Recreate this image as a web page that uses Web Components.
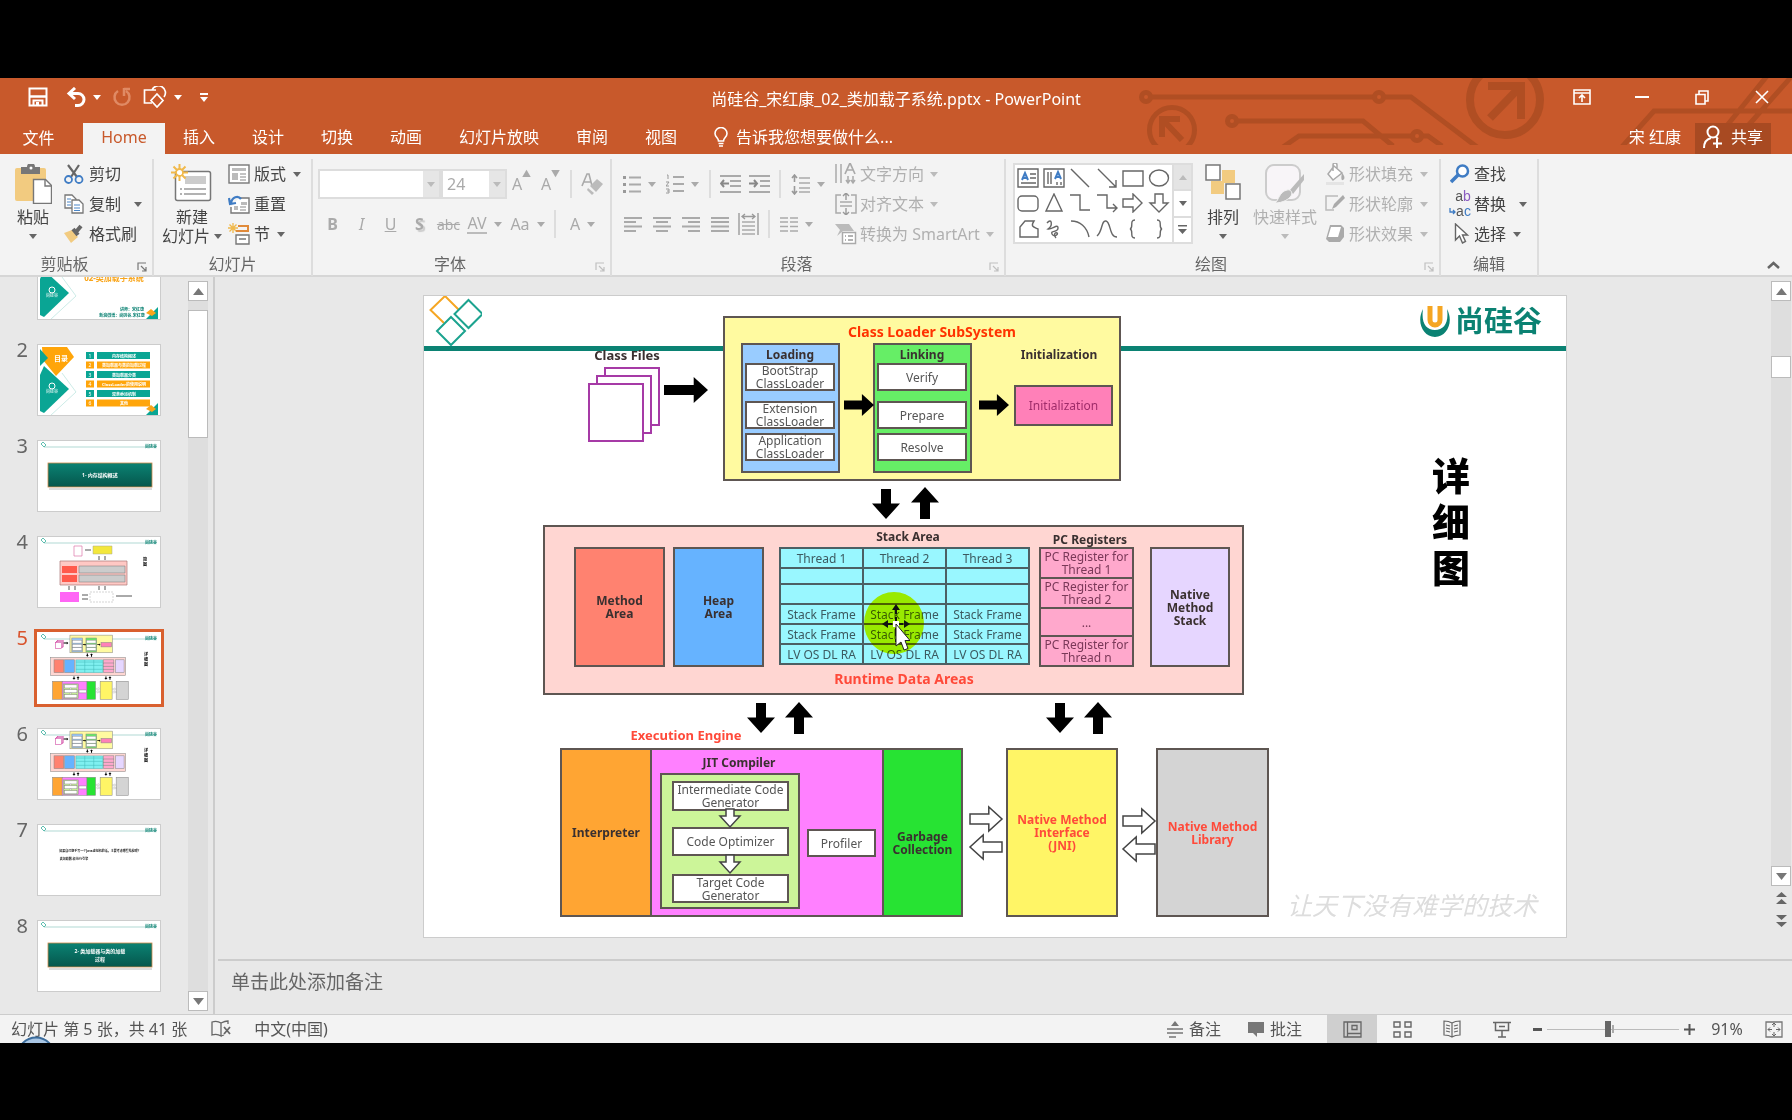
<!DOCTYPE html>
<html lang="zh-CN">
<head>
<meta charset="utf-8">
<title>尚硅谷_宋红康_02_类加载子系统.pptx - PowerPoint</title>
<style>
  html, body { height: 100%; margin: 0; background: #000; }
  body { font-family: "Noto Sans", "Noto Sans CJK SC", sans-serif; font-size: 16px; color: #444; }
</style>
</head>
<body>
<ppt-app></ppt-app>
<script>
const ICONS = {
  caret: [8, 5, '<path d="M0 0h8L4 5z" fill="currentColor"/>'],
  up: [11, 7, '<path d="M0 7L5.500 0 11 7z" fill="#777"/>'],
  down: [11, 7, '<path d="M0 0h11L5.500 7z" fill="#777"/>'],
  dblup: [11, 12, '<path d="M0 5L5.500 0 11 5zM0 12L5.500 7 11 12z" fill="#666"/>'],
  dbldown: [11, 12, '<path d="M0 0h11L5.500 5zM0 7h11L5.500 12z" fill="#666"/>'],
  save: [20, 20, '<path d="M1.500 1.500h17v17h-17z" fill="none" stroke="#fff" stroke-width="2"/><path d="M1.500 9.500h17" stroke="#fff" stroke-width="2.500"/><path d="M5.500 19v-5.500h9V19" fill="none" stroke="#fff" stroke-width="2"/><path d="M8 15h3v4H8z" fill="#fff"/>'],
  undo: [20, 20, '<path d="M9 1L3 6.500 9 12M4 6.500h8a5.500 5.500 0 0 1 0 12H9" fill="none" stroke="#fff" stroke-width="3"/>'],
  redo: [20, 20, '<path d="M6 4a7.500 7.500 0 1 0 8 0M12 1v8M12 2h6" fill="none" stroke="#e08a64" stroke-width="2.500"/>'],
  qshape: [24, 22, '<path d="M9 17H1.500V4H13M9 4a7 7 0 1 1 12 7" fill="none" stroke="#fff" stroke-width="1.700"/><path d="M14 8l6 6.500-6 6.500-6-6.500z" fill="none" stroke="#fff" stroke-width="1.700"/>'],
  custom: [8, 9, '<path d="M0 0h8v2H0zM0 4h8L4 9z" fill="#fff"/>'],
  ribbonopt: [18, 16, '<path d="M1 1h16v14H1zM1 4h16M9 13V6M6 9l3-3 3 3" fill="none" stroke="#fff" stroke-width="1.600"/>'],
  min: [14, 2, '<path d="M0 0h14v2H0z" fill="#fff"/>'],
  restore: [14, 15, '<path d="M1 4.500h9V14H1zM4 4V1h9v10h-3" fill="none" stroke="#fff" stroke-width="1.600"/>'],
  close: [14, 14, '<path d="M1 1l12 12M13 1L1 13" stroke="#fff" stroke-width="1.600"/>'],
  bulb: [14, 20, '<path d="M4.500 14c0-3-3.500-4-3.500-7.500a6 6 0 0 1 12 0c0 3.500-3.500 4.500-3.500 7.500zM4.500 16.500h5M5 19h4" fill="none" stroke="#fff" stroke-width="1.600"/>'],
  person: [20, 24, '<circle cx="10" cy="7" r="5.500" fill="none" stroke="#fff" stroke-width="2"/><path d="M1 23c0-6 3-9 7-10M14 14v9M10 18.500h9M13 12l2 2" fill="none" stroke="#fff" stroke-width="2"/>'],
  paste: [38, 40, '<rect x="1" y="4" width="31" height="33" rx="2" fill="#f2cb80"/><path d="M7 3h6a4 4 0 0 1 8 0h5v7H7z" fill="#777"/><circle cx="17" cy="4" r="1.500" fill="#fff"/><path d="M19.500 15.500h12l6 6v18h-18z" fill="#fff" stroke="#777" stroke-width="1.400"/><path d="M31 15.500V22h6.500" fill="none" stroke="#777" stroke-width="1.400"/>'],
  cut: [20, 20, '<path d="M4 1l9 12M15 1L7 13" stroke="#666" stroke-width="2.200"/><circle cx="4.500" cy="15.500" r="3.500" fill="none" stroke="#3f7cc4" stroke-width="1.800"/><circle cx="15" cy="15.500" r="3.500" fill="none" stroke="#3f7cc4" stroke-width="1.800"/>'],
  copy: [20, 20, '<path d="M1 1h7l4 4v9H1z" fill="#fff" stroke="#777" stroke-width="1.300"/><path d="M8 6h7l4 4v9H8z" fill="#fff" stroke="#777" stroke-width="1.300"/><path d="M3 5h4M3 8h4M3 11h4M10 11h6M10 14h6M10 16.500h6" stroke="#4a86c8" stroke-width="1.100"/>'],
  brush: [20, 20, '<path d="M0 9l8-3 6 7-7 6z" fill="#f2cb80"/><path d="M9 5l5 6M12 8l5-6" stroke="#666" stroke-width="4"/>'],
  newslide: [42, 38, '<rect x="4.500" y="7.500" width="35" height="29" rx="2" fill="#fff" stroke="#777" stroke-width="1.500"/><path d="M14 12h21v8H14z" fill="#ccc"/><path d="M9 25h2M13 25h22M9 30h2M13 30h22" stroke="#999" stroke-width="1.500"/><path d="M8.500 0v17M0 8.500h17M2.500 2.500l12 12M14.500 2.500l-12 12" stroke="#f0b94c" stroke-width="2"/><circle cx="8.500" cy="8.500" r="3.500" fill="#fff" stroke="#f0b94c" stroke-width="1.800"/>'],
  layout: [22, 20, '<rect x="1" y="1" width="20" height="18" fill="#fff" stroke="#777" stroke-width="1.400"/><path d="M4 4h14v3H4zM4 9h6v7H4z" fill="#bbb"/><path d="M12 10h6M12 13h6M12 16h6" stroke="#888" stroke-width="1.200"/>'],
  reset: [22, 20, '<path d="M11 4h10v15H3v-6" fill="#fff" stroke="#777" stroke-width="1.400"/><path d="M13 8h6v3h-6zM6 12h4v4H6z" fill="#bbb"/><path d="M12 13h6M12 16h6" stroke="#888"/><path d="M3 9C4 3 10 1 13 5M1 4l1 6 6-1" fill="none" stroke="#3f7cc4" stroke-width="2.200"/>'],
  section: [22, 22, '<path d="M5 0v10M0 5h10M1.500 1.500l7 7M8.500 1.500l-7 7" stroke="#f0b94c" stroke-width="1.300"/><path d="M10 3h10v5H8" fill="none" stroke="#e08a3a" stroke-width="2"/><path d="M8 12h13v9H8z" fill="#fff" stroke="#777" stroke-width="1.400"/><path d="M11 16h7" stroke="#999" stroke-width="2"/>'],
  eraser: [22, 22, '<path d="M1 13L6 1h2l3 12M3 9h7" fill="none" stroke="#aaa" stroke-width="1.600"/><path d="M9 13l7-7 6 5-7 8z" fill="#bbb"/><path d="M7 15l6 5-2 2-5-5z" fill="#bbb"/>'],
  bullets: [18, 19, '<path d="M6 2.500h12M6 9.500h12M6 16.500h12" stroke="#aaa" stroke-width="1.800"/><path d="M0 1h3v3H0zM0 8h3v3H0zM0 15h3v3H0z" fill="#999"/>'],
  numbers: [18, 20, '<path d="M7 3h11M7 10h11M7 17h11" stroke="#aaa" stroke-width="1.800"/><path d="M1 1h1v4M0 8h3l-3 4h3M0 15h3v4H0M1 17h2" fill="none" stroke="#999"/>'],
  dedent: [21, 18, '<path d="M0 1h21M10 6h11M10 11h11M0 17h21" stroke="#aaa" stroke-width="1.800"/><path d="M9 8.500H1M4 5L1 8.500 4 12" fill="none" stroke="#888" stroke-width="2"/>'],
  indent: [21, 18, '<path d="M0 1h21M11 6h10M11 11h10M0 17h21" stroke="#aaa" stroke-width="1.800"/><path d="M0 8.500h8M5 5l3 3.500L5 12" fill="none" stroke="#888" stroke-width="2"/>'],
  spacing: [19, 21, '<path d="M8 4h11M8 9h11M8 14h11M8 18h11" stroke="#aaa" stroke-width="1.600"/><path d="M3.500 1v7M1 4l2.500-3L6 4M3.500 12v8M1 17l2.500 3L6 17" fill="none" stroke="#999" stroke-width="1.600"/>'],
  left: [18, 15, '<path d="M0 1h18M0 5h12M0 9.500h18M0 14h12" stroke="#aaa" stroke-width="1.800"/>'],
  center: [18, 15, '<path d="M0 1h18M3 5h12M0 9.500h18M3 14h12" stroke="#aaa" stroke-width="1.800"/>'],
  right: [18, 15, '<path d="M0 1h18M6 5h12M0 9.500h18M6 14h12" stroke="#aaa" stroke-width="1.800"/>'],
  justify: [18, 15, '<path d="M0 1h18M0 5h18M0 9.500h18M0 14h18" stroke="#aaa" stroke-width="1.800"/>'],
  distribute: [21, 22, '<path d="M1 0v22M20 0v22M4 9h13M4 13h13M4 17h13M4 21h13" stroke="#aaa" stroke-width="1.700"/><path d="M4 3.500h13M7 1L4 3.500 7 6M14 1l3 2.500L14 6" fill="none" stroke="#999" stroke-width="1.300"/>'],
  columns: [18, 15, '<path d="M0 1h8M0 5h8M0 9.500h8M0 14h8M10 1h8M10 5h8M10 9.500h8M10 14h8" stroke="#aaa" stroke-width="1.700"/>'],
  textdir: [22, 22, '<path d="M1 1v19M6 1v19M13 13v7M18 13v7M11 17l2 3 2-3M16 17l2 3 2-3" fill="none" stroke="#aaa" stroke-width="1.500"/><path d="M10 11l5-11 5 11M12 7h6" fill="none" stroke="#aaa" stroke-width="1.700"/>'],
  aligntext: [22, 22, '<path d="M6 2H1v18h5M16 2h5v18h-5M5 9h12M5 13h12" fill="none" stroke="#aaa" stroke-width="1.500"/><path d="M11 0v7M8 3l3-3 3 3M11 15v7M8 19l3 3 3-3" fill="none" stroke="#999" stroke-width="1.400"/>'],
  smartart: [22, 22, '<path d="M0 1h14l5 7H8l-6 5 3-6z" fill="#bbb"/><path d="M7.500 9.500h13v11h-13z" fill="#fff" stroke="#aaa" stroke-width="1.500"/><path d="M10 13h1M13 13h5M10 17h1M13 17h5" stroke="#999" stroke-width="1.500"/>'],
  arrange: [36, 36, '<path d="M17 6h13v13H17zM6 17h13v13H6z" fill="#f2cb80"/><path d="M1 1h14v15H1zM21 20h14v15H21z" fill="#fff" stroke="#777" stroke-width="1.500"/>'],
  quick: [40, 40, '<rect x="1" y="1" width="34" height="35" rx="8" fill="#f8f5f8" stroke="#ccc" stroke-width="2"/><path d="M39 10L25 26l3 4L39 16z" fill="#bbb"/><path d="M22 26c4-1 6 3 4 6s-8 7-16 7c4-3 4-11 12-13z" fill="#bbb" stroke="#f3f3f3"/>'],
  fill: [20, 22, '<path d="M9 3l8 7-9 7-5-6zM8 8V2a2 2 0 0 1 4 0v4" fill="#fff" stroke="#aaa" stroke-width="1.500"/><path d="M17 10c3 3 3 6 1 7s-2-3-1-7z" fill="#aaa"/><path d="M1 19h18v3H1z" fill="#e4e4e4"/>'],
  outline: [20, 20, '<path d="M13 2H1v14h8" fill="none" stroke="#bbb" stroke-width="1.500"/><path d="M7 15l2-5 9-9 2 3-9 9z" fill="#aaa"/>'],
  effect: [20, 20, '<path d="M5 1h11l3 3v9l-4 5H4l-3-3z" fill="#aaa"/><path d="M6 3h10l-3 10H3z" fill="#fff"/>'],
  find: [20, 20, '<circle cx="12.500" cy="7" r="5.500" fill="#fff" stroke="#3f7cc4" stroke-width="2.500"/><path d="M8 11l-7 7" stroke="#3f7cc4" stroke-width="3.500"/>'],
  select: [20, 22, '<path d="M5.500 1v16l4-4 3 7 3-1.500-3-6.500h5z" fill="#fff" stroke="#666" stroke-width="1.400"/>'],
  launch: [10, 10, '<path d="M1 8V1h8M4 4l5 5M9 5v4H5" fill="none" stroke="currentColor" stroke-width="1.200"/>'],
  fold: [13, 8, '<path d="M1 7l5.500-5L12 7" fill="none" stroke="#666" stroke-width="2.500"/>'],
  gup: [8, 5, '<path d="M0 5l4-5 4 5z" fill="#bbb"/>'],
  gmore: [9, 9, '<path d="M0 0h9v1.500H0zM0 4h9L4.500 9z" fill="#666"/>'],
  turn: [7, 7, '<path d="M1 0v4h5M4 2l2 2-2 2" fill="none" stroke="#3f7cc4" stroke-width="1.300"/>'],
  proof: [20, 18, '<path d="M10 3C7 1 4 1 1 2v13c3-1 6-1 9 1zM10 3c2-1 4-2 7-2v3M10 16l3-1" fill="none" stroke="#666" stroke-width="1.300"/><path d="M13 7l6 7M19 7l-6 7" stroke="#666" stroke-width="1.800"/>'],
  notes: [16, 17, '<path d="M4 5l4-5 4 5z" fill="#777"/><path d="M0 8h16M0 12h16M2 16h7" stroke="#777" stroke-width="1.400"/>'],
  comment: [16, 16, '<path d="M0 1h16v11H9v4l-4-4H0z" fill="#777"/>'],
  normal: [19, 17, '<path d="M1 1h17v15H1zM4.500 1v15M5 12.500h13" fill="none" stroke="#666" stroke-width="1.300"/><path d="M9 4.500h5v4H9z" fill="none" stroke="#666" stroke-width="1.300"/>'],
  sorter: [19, 17, '<path d="M1 1h6v5H1zM12 1h6v5h-6zM1 11h6v5H1zM12 11h6v5h-6z" fill="none" stroke="#666" stroke-width="1.400"/>'],
  reading: [18, 18, '<path d="M9 3C6 1 4 1 1 1v14c3 0 5 0 8 2 3-2 5-2 8-2V1c-3 0-5 0-8 2zM9 3v14M3 5l4 1M3 8l4 1M3 11l4 1M15 5l-4 1M15 8l-4 1M15 11l-4 1" fill="none" stroke="#666" stroke-width="1.200"/>'],
  show: [18, 17, '<path d="M0 1.500h18M2.500 2v7.500h13V2M9 10v6M5 16h8M6 5.500h6" fill="none" stroke="#666" stroke-width="1.500"/>'],
  minus: [9, 3, '<path d="M0 0h9v3H0z" fill="#555"/>'],
  plus: [11, 11, '<path d="M0 4.500h11v2H0zM4.500 0h2v11h-2z" fill="#555"/>'],
  fit: [18, 17, '<path d="M1 1h16v15H1z" fill="none" stroke="#777" stroke-width="1.300"/><path d="M9 2v4M9 11v4M3 8.500h4M11 8.500h4M7 4l2-2 2 2M7 13l2 2 2-2M5 6.500l-2 2 2 2M13 6.500l2 2-2 2" fill="none" stroke="#666"/>'],
  orb: [40, 7, '<circle cx="20" cy="20" r="18.500" fill="#a9c6e4" stroke="#3b6c9c" stroke-width="2"/>'],
  diamonds: [56, 54, '<g fill="none" stroke-width="2"><path d="M33 16L19 2 4.500 16 18 29" stroke="#f5a623"/><path d="M42.500 6l14 14-14 14-14-14z" stroke="#1ca38f"/><path d="M25 23l14 14-14 14L11 37z" stroke="#1ca38f"/></g>'],
  logo: [32, 34, '<path d="M4 5C-3 18 4 33 16 33S35 18 28 5c2 14-3 21-12 21S2 19 4 5z" fill="#0b8273"/><path d="M11 2v14a5 5 0 0 0 10 0V2" fill="none" stroke="#f5a623" stroke-width="5"/>'],
  pointer: [28, 48, '<path d="M14 2v36M2 20h24" fill="none" stroke="#111" stroke-width="2" stroke-dasharray="8 3"/><path d="M14 0l-4 6h8zM0 20l6-4v8zM28 20l-6-4v8z" fill="#111"/><path d="M11 17h6v6h-6z" fill="#fff"/><path d="M14 20v22l5-4 3 8 4-1.500-3-8h5z" fill="#fff" stroke="#222"/>']
};
const icon = n => `<svg class="i i-${n}" width="${ICONS[n][0]}" height="${ICONS[n][1]}" viewBox="0 0 ${ICONS[n][0]} ${ICONS[n][1]}" aria-hidden="true">${ICONS[n][2]}</svg>`;
const BASE = `
  * { box-sizing: border-box; }
  svg { display: block; flex: none; }
  button, select, input, textarea { font: inherit; color: inherit; background: none; border: 0; border-radius: 0; padding: 0; margin: 0; }
  button { display: flex; align-items: center; justify-content: center; white-space: nowrap; }`;
function define(name, render, after) {
  customElements.define(name, class extends HTMLElement {
    constructor() { super(); this.attachShadow({ mode: 'open' }); }
    connectedCallback() {
      this.shadowRoot.innerHTML = `<style>${BASE}</style>` + render(this);
      if (after) after(this);
    }
  });
}

/* ---------- ribbon controls ---------- */
define('small-button', el => `<style>
  :host { display: flex; height: 30px; }
  button { gap: var(--gap, 4px); color: ${el.hasAttribute('off') ? '#b0b0b0' : '#444'}; line-height: 24px; }
  .ic { display: flex; width: var(--icon, 22px); justify-content: center; }
  .i-caret { margin-left: 3px; color: ${el.hasAttribute('off') ? '#bbb' : '#666'}; }
  :host([wide]) .i-caret { margin-left: 9px; }
  </style><button ${el.hasAttribute('off') ? 'disabled' : ''}><span class="ic">${el.hasAttribute('icon') ? icon(el.getAttribute('icon')) : '<slot name="icon"></slot>'}</span><slot></slot>${el.hasAttribute('menu') ? icon('caret') : ''}</button>`);

define('big-button', el => `<style>
  :host { display: block; height: 90px; flex: none; }
  button { flex-direction: column; justify-content: flex-start; width: 100%; height: 90px; color: ${el.hasAttribute('off') ? '#b0b0b0' : '#444'}; }
  .pic { height: 48px; padding-top: 5px; }
  .t { line-height: 20px; }
  .m { display: flex; align-items: center; gap: 4px; height: 19px; line-height: 19px; }
  .i-caret { color: ${el.hasAttribute('off') ? '#bbb' : '#666'}; }
  </style><button ${el.hasAttribute('off') ? 'disabled' : ''}><span class="pic">${icon(el.getAttribute('icon'))}</span><span class="t"><slot></slot></span><span class="m"><slot name="more"></slot>${icon('caret')}</span></button>`);

define('tool-button', el => `<style>
  :host { display: block; flex: none; }
  button { width: 29px; height: 30px; color: #aaa; }
  :host([menu]) button { width: 43px; gap: 7px; }
  </style><button disabled aria-label="${el.getAttribute('label') || ''}">${el.hasAttribute('icon') ? icon(el.getAttribute('icon')) : '<slot></slot>'}${el.hasAttribute('menu') ? icon('caret') : ''}</button>`);

define('combo-box', el => `<style>
  :host { display: block; position: relative; height: 30px; }
  select { appearance: none; width: 100%; height: 30px; padding: 0 4px; background: #fff; border: 2px solid #ddd; color: #aaa; opacity: 1; }
  span { position: absolute; right: 2px; top: 2px; width: 16px; height: 26px; display: grid; place-items: center; background: #e6e6e6; color: #bbb; pointer-events: none; }
  </style><select disabled aria-label="${el.getAttribute('label')}"><option>${el.getAttribute('value')}</option></select><span>${icon('caret')}</span>`);

define('ribbon-group', el => `<style>
  :host { display: flex; flex-direction: column; flex: none; height: 117px; border-right: 2px solid #ddd; }
  .body { display: flex; height: 90px; }
  .foot { display: flex; align-items: center; height: 27px; padding: 3px 3px 0 0; color: #666; line-height: 24px; }
  .name { flex: 1; text-align: center; padding-right: 6px; }
  .foot button { width: 14px; height: 14px; margin-top: 5px; color: ${el.getAttribute('launch') === 'on' ? '#777' : '#c0c0c0'}; }
  :host(:not([launch])) .name { padding: 0 0 0 3px; }
  </style><div class="body"><slot></slot></div><div class="foot"><span class="name">${el.getAttribute('label')}</span>${el.hasAttribute('launch') ? `<button aria-label="${el.getAttribute('label')}">${icon('launch')}</button>` : ''}</div>`);

const SHAPES = [
  '<path d="M2 1h20v18H2z"/><path d="M6 12l3-7 3 7M7 10h4" stroke="#3f7cc4" stroke-width="2"/><path d="M14 6h6M14 10h6M5 15h15"/>',
  '<path d="M2 1h20v18H2zM6 4v12M9 4v12M15 14v3M19 14v3"/><path d="M13 11l3-7 3 7M14 9h4" stroke="#3f7cc4" stroke-width="2"/>',
  '<path d="M3 1l18 18"/>', '<path d="M3 1l18 18M21 12v7h-7"/>', '<path d="M2 3h20v15H2z"/>', '<ellipse cx="12" cy="10" rx="9.500" ry="8"/>',
  '<rect x="2" y="3" width="20" height="15" rx="4"/>', '<path d="M12 1l8 17H4z"/>', '<path d="M2 2h10v15h10"/>', '<path d="M2 2h10v13h10M18 11l4 4-4 4"/>', '<path d="M2 6h10V1l9 9-9 9v-5H2z"/>', '<path d="M8 1h8v9h5l-9 9-9-9h5z"/>',
  '<path d="M4 18V8l5-6h9c-4 6 0 6 4 8v8z"/>', '<path d="M5 4c5-6 6 3 1 6 4 1 10-6 10-1s-8 2-6 6 7 0 5-1-4 2-1 5"/>', '<path d="M3 2c9 0 16 6 18 16"/>', '<path d="M2 17C8 12 6 1 11 2s3 16 11 16"/>', '<path d="M14 1c-6 0-1 8-5 9 4 1-1 9 5 9"/>', '<path d="M10 1c6 0 1 8 5 9-4 1 1 9-5 9"/>'];
define('shape-gallery', () => `<style>
  :host { display: flex; width: 180px; height: 81px; margin-top: 4px; background: #fff; border: 2px solid #ddd; }
  .g { flex: 1; display: grid; grid-template-columns: repeat(6, 1fr); grid-template-rows: repeat(3, 1fr); place-items: center; }
  .g svg { fill: none; stroke: #666; stroke-width: 1.4; }
  .s { width: 19px; display: flex; flex-direction: column; border-left: 2px solid #ddd; color: #666; }
  .s button { flex: 1; width: 100%; }
  .s button + button { border-top: 2px solid #ddd; }
  .s button:first-child { background: #e4e4e4; }
  </style><div class="g">${SHAPES.map(s => `<button aria-label="形状"><svg width="24" height="20" viewBox="0 0 24 20">${s}</svg></button>`).join('')}</div>
  <div class="s"><button aria-label="上">${icon('gup')}</button><button aria-label="下">${icon('caret')}</button><button aria-label="更多">${icon('gmore')}</button></div>`);

define('ppt-ribbon', () => `<style>
  :host { display: flex; height: 123px; padding-top: 5px; background: #f3f3f3; border-bottom: 2px solid #d6d6d6; color: #444; }
  .col { display: flex; flex-direction: column; }
  .rows { display: flex; flex-direction: column; gap: 10px; padding-top: 10px; }
  .row { display: flex; align-items: center; height: 30px; }
  .sep { width: 2px; height: 28px; background: #ddd; margin: 0 5px; }
  .font { padding-left: 5px; } .para { padding-left: 6px; width: 223px; }
  .fill { flex: 1; display: flex; align-items: flex-end; justify-content: flex-end; padding: 0 12px 6px 0; }
  .ab { display: flex; flex-direction: column; align-items: flex-end; font: 14px/15px "Liberation Sans", sans-serif; color: #555; }
  .ab > span { display: flex; align-items: center; height: 15px; }
  .ab b { font-weight: 400; color: #8a5cc0; } .ab i { font-style: normal; color: #3f7cc4; }
  .av { border-bottom: 2px solid #bbb; line-height: 18px; }
  .sh { text-shadow: 2px 2px 1px #ccc; font-weight: 700; }
  sup { font-size: 9px; line-height: 9px; align-self: flex-start; }
  </style>
  <ribbon-group label="剪贴板" launch="on" style="width:154px">
    <big-button icon="paste" style="width:44px;margin:0 8px 0 11px">粘贴</big-button>
    <div class="col"><small-button icon="cut">剪切</small-button><small-button icon="copy" menu wide>复制</small-button><small-button icon="brush">格式刷</small-button></div>
  </ribbon-group>
  <ribbon-group label="幻灯片" style="width:159px">
    <big-button icon="newslide" style="width:64px;margin:0 4px 0 6px">新建<span slot="more">幻灯片</span></big-button>
    <div class="col"><small-button icon="layout" menu>版式</small-button><small-button icon="reset">重置</small-button><small-button icon="section" menu>节</small-button></div>
  </ribbon-group>
  <ribbon-group label="字体" launch style="width:299px">
    <div class="rows font">
      <div class="row"><combo-box label="字体" value="" style="width:123px"></combo-box><combo-box label="字号" value="24" style="width:66px"></combo-box><tool-button label="增大字号">A<sup>▲</sup></tool-button><tool-button label="减小字号">A<sup>▼</sup></tool-button><span class="sep"></span><tool-button icon="eraser" label="清除格式"></tool-button></div>
      <div class="row"><tool-button><b>B</b></tool-button><tool-button><i>I</i></tool-button><tool-button><u>U</u></tool-button><tool-button><span class="sh">S</span></tool-button><tool-button><s style="font-size:14px">abc</s></tool-button><tool-button menu><span class="av">AV</span></tool-button><tool-button menu>Aa</tool-button><span class="sep"></span><tool-button menu>A</tool-button></div>
    </div>
  </ribbon-group>
  <ribbon-group label="段落" launch style="width:394px">
    <div class="rows para">
      <div class="row"><tool-button icon="bullets" menu></tool-button><tool-button icon="numbers" menu></tool-button><span class="sep"></span><tool-button icon="dedent"></tool-button><tool-button icon="indent"></tool-button><span class="sep"></span><tool-button icon="spacing" menu></tool-button></div>
      <div class="row"><tool-button icon="left"></tool-button><tool-button icon="center"></tool-button><tool-button icon="right"></tool-button><tool-button icon="justify"></tool-button><tool-button icon="distribute"></tool-button><span class="sep"></span><tool-button icon="columns" menu></tool-button></div>
    </div>
    <div class="col" style="--gap:3px"><small-button icon="textdir" off menu>文字方向</small-button><small-button icon="aligntext" off menu>对齐文本</small-button><small-button icon="smartart" off menu>转换为 SmartArt</small-button></div>
  </ribbon-group>
  <ribbon-group label="绘图" launch style="width:435px">
    <shape-gallery style="margin-left:7px"></shape-gallery>
    <big-button icon="arrange" style="width:44px;margin-left:8px">排列</big-button>
    <big-button icon="quick" off style="width:68px;margin:0 6px">快速样式</big-button>
    <div class="col" style="--icon:20px"><small-button icon="fill" off menu>形状填充</small-button><small-button icon="outline" off menu>形状轮廓</small-button><small-button icon="effect" off menu>形状效果</small-button></div>
  </ribbon-group>
  <ribbon-group label="编辑" style="width:98px">
    <div class="col" style="--icon:20px;padding-left:9px"><small-button icon="find">查找</small-button><small-button menu wide><span slot="icon" class="ab"><span>a<b>b</b></span><span>${icon('turn')}a<i>c</i></span></span>替换</small-button><small-button icon="select" menu>选择</small-button></div>
  </ribbon-group>
  <div class="fill"><button aria-label="折叠功能区">${icon('fold')}</button></div>`);

/* ---------- title bar and tabs ---------- */
define('ppt-header', () => `<style>
  :host { display: block; position: relative; height: 76px; background: #c8592b; color: #fff; overflow: hidden; }
  .art { position: absolute; right: 0; top: 0; }
  .title, .tabs { position: relative; display: flex; align-items: center; }
  .title { height: 38px; margin-bottom: 7px; }
  .side { flex: 1 1 0; display: flex; align-items: center; }
  .qat button { height: 30px; } .qat .i-caret { margin-left: 7px; }
  h1 { margin: 0; font-size: 16px; font-weight: 400; line-height: 24px; padding-top: 3px; }
  .win { justify-content: flex-end; }
  .win button { width: 60px; height: 38px; }
  nav { display: flex; }
  .tabs { height: 31px; }
  .tabs button { height: 31px; padding: 0 19px 3px 18px; line-height: 28px; }
  .tabs .file { width: 83px; padding: 0 6px 2px 0; }
  .tabs .on { width: 82px; padding: 0 0 3px; background: #f3f3f3; color: #c8592b; }
  .tell { gap: 8px; }
  .tabs .user { margin-left: auto; padding: 0 14px 3px; }
  .tabs .share { width: 76px; padding: 0 0 3px; gap: 8px; margin-right: 21px; background: #a84a22; }
  </style>
  <svg class="art" width="660" height="76" viewBox="1132 78 660 76" fill="none" stroke="#b04e23" stroke-width="5"><defs><clipPath id="c"><path d="M1132 78h660v67h-660z"/></clipPath></defs><g clip-path="url(#c)">
    <circle cx="1146" cy="97" r="4.500"/><path d="M1151 97h223M1384 97h27l66 50"/><circle cx="1379" cy="97" r="4.500"/>
    <circle cx="1232" cy="121" r="4.500"/><path d="M1237 121h126l30 25M1283 147l16-11h113M1422 136h6l14 10"/><circle cx="1417" cy="136" r="4.500"/>
    <circle cx="1172" cy="130" r="22.500"/><path d="M1162 137v-18h18M1163 120l19 20" stroke-width="6"/>
    <circle cx="1505" cy="100" r="35" stroke-width="8"/><path d="M1488 86h33v33M1520 87l-30 31" stroke-width="8"/>
    <path d="M1620 149l34-38h140M1767 76l-42 52M1792 76l-46 52"/></g></svg>
  <div class="title">
    <div class="side qat"><button aria-label="保存" style="margin-left:28px">${icon('save')}</button><button aria-label="撤消" style="margin-left:18px">${icon('undo')}${icon('caret')}</button><button aria-label="恢复" style="margin-left:11px">${icon('redo')}</button><button aria-label="形状" style="margin-left:11px">${icon('qshape')}${icon('caret')}</button><button aria-label="自定义" style="margin-left:18px">${icon('custom')}</button></div>
    <h1>尚硅谷_宋红康_02_类加载子系统.pptx - PowerPoint</h1>
    <div class="side win"><button aria-label="功能区选项">${icon('ribbonopt')}</button><button aria-label="最小化">${icon('min')}</button><button aria-label="还原">${icon('restore')}</button><button aria-label="关闭">${icon('close')}</button></div>
  </div>
  <div class="tabs"><nav><button class="file">文件</button><button class="on">Home</button><button>插入</button><button>设计</button><button>切换</button><button>动画</button><button>幻灯片放映</button><button>审阅</button><button>视图</button></nav>
    <button class="tell">${icon('bulb')}告诉我您想要做什么...</button><button class="user">宋 红康</button><button class="share">${icon('person')}共享</button></div>`);

/* ---------- slide drawing ---------- */
/* x, y, width, height, fill, text, modifier */
const BOXES = [
  [180, 71, 56, 59, '#fff', '', 'doc'], [172, 79, 56, 59, '#fff', '', 'doc'], [164, 87, 56, 59, '#fff', '', 'doc'],
  [299, 20, 398, 165, '#fffaa0', ''],
  [317, 47, 99, 130, '#9cf', ''], [321, 67, 90, 28, '#fff', 'BootStrap\nClassLoader', 'v'], [321, 105, 90, 28, '#fff', 'Extension\nClassLoader', 'v'], [321, 137, 90, 28, '#fff', 'Application\nClassLoader', 'v'],
  [449, 47, 99, 130, '#6e6', ''], [453, 67, 90, 28, '#fff', 'Verify', 'v'], [453, 105, 90, 28, '#fff', 'Prepare', 'v'], [453, 137, 90, 28, '#fff', 'Resolve', 'v'],
  [590, 89, 99, 41, '#ff80b8', 'Initialization', 'init'],
  [119, 229, 701, 170, '#ffd6d2', ''],
  [150, 251, 91, 120, '#ff8270', 'Method\nArea', 'bold'], [249, 251, 91, 120, '#66b3ff', 'Heap\nArea', 'bold'], [726, 251, 80, 120, '#e6d6ff', 'Native\nMethod\nStack', 'bold'],
  [615, 251, 95, 32, '#ffa8cc', 'PC Register for\nThread 1', 'pc'], [615, 281, 95, 32, '#ffa8cc', 'PC Register for\nThread 2', 'pc'], [615, 311, 95, 30, '#ffa8cc', '...', 'pc'], [615, 339, 95, 32, '#ffa8cc', 'PC Register for\nThread n', 'pc'],
  [136, 452, 92, 169, '#ffa533', 'Interpreter', 'bold'], [226, 452, 234, 169, '#ff80ff', ''], [458, 452, 81, 169, '#27e333', 'Garbage\nCollection', 'bold low'],
  [236, 477, 140, 136, '#ccf599', ''], [248, 485, 117, 30, '#fff', 'Intermediate Code\nGenerator', 'v'], [248, 531, 117, 29, '#fff', 'Code Optimizer', 'v'], [248, 578, 117, 29, '#fff', 'Target Code\nGenerator', 'v'],
  [383, 533, 69, 28, '#fff', 'Profiler', 'v'],
  [582, 452, 112, 169, '#fff566', 'Native Method\nInterface\n(JNI)', 'bold red'], [732, 452, 113, 169, '#d4d4d4', 'Native Method\nLibrary', 'bold red']];
/* centre x, centre y, text, modifier */
const LABELS = [[203, 59, 'Class Files', 'mid'], [508, 35, 'Class Loader SubSystem', 'big hot'], [366, 58, 'Loading'], [498, 58, 'Linking'], [635, 58, 'Initialization'],
  [484, 240, 'Stack Area'], [666, 243, 'PC Registers'], [480, 382, 'Runtime Data Areas', 'big red'], [262, 439, 'Execution Engine', 'mid red'], [315, 466, 'JIT Compiler']];
const R = (x, y, w, s, h) => `M${x} ${y - s / 2}h${w - h * .55}v${(s - h) / 2}l${h * .55} ${h / 2}l${-h * .55} ${h / 2}v${(s - h) / 2}H${x}z`;
const arrow = (x, y, w, s, h, deg, open) => `<path d="${R(-w / 2, 0, w, s, h)}" transform="translate(${x} ${y}) rotate(${deg})" ${open ? 'fill="#fff" stroke="#444" stroke-width="1.500"' : 'fill="#000"'}/>`;
const ARROWS = [arrow(262, 94, 44, 10, 26, 0), arrow(435, 109, 30, 9, 22, 0), arrow(570, 109, 30, 9, 22, 0),
  arrow(462, 208, 30, 10, 28, 90), arrow(501, 207, 32, 10, 28, -90), arrow(337, 422, 30, 10, 28, 90), arrow(375, 422, 32, 10, 28, -90), arrow(636, 422, 30, 10, 28, 90), arrow(674, 422, 32, 10, 28, -90),
  arrow(306, 522, 18, 8, 20, 90, 1), arrow(306, 568, 18, 8, 20, 90, 1), arrow(562, 523, 32, 10, 24, 0, 1), arrow(562, 551, 32, 10, 24, 180, 1), arrow(715, 525, 32, 10, 24, 0, 1), arrow(715, 553, 32, 10, 24, 180, 1)].join('');
const rowsOf = ([t, ...r]) => `<tr>${t.map(c => `<th>${c}</th>`).join('')}</tr>` + r.map(x => `<tr>${x.map(c => `<td>${c}</td>`).join('')}</tr>`).join('');

define('slide-canvas', () => `<style>
  :host { display: block; position: relative; flex: none; width: 1142px; height: 641px; background: #fff; outline: 1px solid #ccc; overflow: hidden; color: #333; font-size: 12px; line-height: 13px; }
  header { display: flex; align-items: center; justify-content: space-between; height: 55px; padding: 0 24px 0 2px; border-bottom: 5px solid #0b8273; }
  .brand { display: flex; align-items: center; gap: 4px; font-size: 29px; line-height: 34px; font-weight: 700; color: #0b8273; }
  .n, .l, table, .draw, .side, .mark, .spot, .ptr { position: absolute; }
  .n { display: flex; align-items: center; justify-content: center; text-align: center; white-space: pre; border: 2px solid #5e5652; }
  .doc { border-color: #a63aa6; }
  .v, .pc { color: #555; } .init { color: #a02c6a; } .pc { color: #7a3858; }
  .bold, .l { font-weight: 700; color: #3a3030; }
  .low { padding-top: 20px; }
  .l { transform: translate(-50%, -50%); white-space: nowrap; }
  .mid { font-size: 13px; } .big { font-size: 14px; } .red { color: #ff4a3a; } .hot { color: #ff3300; }
  table { left: 355px; top: 251px; width: 251px; table-layout: fixed; border-collapse: collapse; background: #99f7ff; color: #3c5a60; }
  th, td { border: 2px solid #4c6064; padding: 0; text-align: center; font-weight: 400; white-space: nowrap; height: 20px; }
  tr:nth-child(2) td { height: 16px; }
  .side { left: 1008px; top: 156px; width: 38px; margin: 0; font-size: 38px; line-height: 46px; font-weight: 900; color: #000; white-space: normal; }
  .mark { right: 29px; bottom: 15px; font-size: 25px; line-height: 34px; font-style: italic; color: #ddd; }
  .spot { left: 440px; top: 296px; width: 60px; height: 62px; border-radius: 50%; background: #a8ea00; mix-blend-mode: darken; }
  .ptr { left: 458px; top: 308px; }
  </style>
  <header>${icon('diamonds')}<span class="brand">${icon('logo')}尚硅谷</span></header>
  ${BOXES.map(([x, y, w, h, f, t, c]) => `<div class="n ${c || ''}" style="left:${x}px;top:${y}px;width:${w}px;height:${h}px;background:${f}">${t}</div>`).join('')}
  <table>${rowsOf([['Thread 1', 'Thread 2', 'Thread 3'], ['', '', ''], ['', '', ''], ['Stack Frame', 'Stack Frame', 'Stack Frame'], ['Stack Frame', 'Stack Frame', 'Stack Frame'], ['LV OS DL RA', 'LV OS DL RA', 'LV OS DL RA']])}</table>
  ${LABELS.map(([x, y, t, c]) => `<span class="l ${c || ''}" style="left:${x}px;top:${y}px">${t}</span>`).join('')}
  <svg class="draw" style="left:0;top:0" width="1142" height="641">${ARROWS}</svg>
  <p class="side">详细图</p><span class="mark">让天下没有难学的技术</span>
  <span class="spot"></span><span class="ptr">${icon('pointer')}</span>`);

/* ---------- thumbnails ---------- */
const T = (x, y, s, t, f, extra = '') => `<text x="${x}" y="${y}" font-size="${s}" fill="${f}" text-anchor="middle" ${extra}>${t}</text>`;
const bar = '<path d="M6 6h112" stroke="#8fc9c2" stroke-width=".7"/><path d="M3 3l2-2 3 3-2 2z" fill="none" stroke="#1ca38f" stroke-width=".7"/>' + T(113, 7, 4, '尚硅谷', '#0b8273', 'font-weight="700"');
const corner = '<path d="M108 70l12-12v12z" fill="#0aa594"/><path d="M108 64l5-4 5 4-4 3z" fill="#f9a51a"/><path d="M24 28l14 19-26 24" fill="none" stroke="#bfe6e1" stroke-width=".8"/><path d="M2 30l4-9 25 23L6 68l-4-2z" fill="#0aa594"/>' + T(14, 48, 4, '尚硅谷', '#fff') + '<circle cx="14" cy="41" r="3" fill="none" stroke="#fff"/>';
const banner = (a, b) => bar + `<rect x="10" y="22" width="104" height="24" fill="url(#g)" stroke="#cf8a4a" stroke-width=".8"/><path d="M11 48h103" stroke="#ddd" stroke-width="2"/>` + T(62, b ? 32 : 36, 5, a, '#fff', 'font-weight="700"') + (b ? T(62, 40, 5, b, '#fff', 'font-weight="700"') : '');
const agenda = ['内存结构概述', '类加载器与类的加载过程', '类加载器分类', 'ClassLoader的使用说明', '双亲委派机制', '其他'];
const mini = bar + `<g transform="scale(.1068)">${BOXES.map(([x, y, w, h, f, t, c]) => `<rect x="${x}" y="${y}" width="${w}" height="${h}" fill="${f}" stroke="${c === 'doc' ? '#c39' : '#888'}" stroke-width="5"/>`).join('')}<path d="M355 252h251v118H355zM355 272h251M355 303h251M355 340h251M438 252v118M522 252v118" fill="#7ff0f0" stroke="#4bb" stroke-width="5"/>${ARROWS}</g>` + T(108, 23, 4, '详', '#000', 'font-weight="700"') + T(108, 28, 4, '细', '#000', 'font-weight="700"') + T(108, 33, 4, '图', '#000', 'font-weight="700"');
const THUMBS = [
  corner + T(76, 32, 8, '02-类加载子系统', '#f9a51a', 'font-weight="700"') + T(94, 62, 4, '讲师：宋红康', '#0b8273', 'font-weight="700"') + T(84, 68, 4, '新浪微博：尚硅谷-宋红康', '#0b8273', 'font-weight="700"'),
  corner + '<path d="M4 2h25l7 10-18 19L5 15z" fill="#ffa50a"/><path d="M2 4l8 9-8 8z" fill="#0aa594"/>' + T(23, 16, 7, '目录', '#fff', 'font-weight="700"') + agenda.map((t, i) => `<path d="M48 ${7 + i * 9.5}h8v7h-8zM59 ${7 + i * 9.5}h53v7H59z" fill="${i % 2 ? '#ffa50a' : '#0aa594'}"/>` + T(52, 12.5 + i * 9.5, 5, i + 1, '#fff') + T(86, 12.5 + i * 9.5, 4, t, '#fff', 'font-weight="700"')).join(''),
  banner('1- 内存结构概述'),
  bar + '<path d="M36 9h8v10h-8z" fill="#fff" stroke="#d7a" stroke-width=".7"/><path d="M47 13h6M61 19v4M67 19v4M31 49v4M37 49v4M61 49v4M67 49v4M44 58h6M44 62h6M78 59h16" stroke="#555"/><path d="M55 9h19v8H55z" fill="#f3e73c" stroke="#aa8" stroke-width=".5"/><path d="M22 24h67v24H22z" fill="#ffc8c4" stroke="#a77" stroke-width=".7"/><path d="M24 29h15v7H24zM24 38h15v7H24z" fill="#ff5a4c"/><path d="M41 29h46v7H41zM41 38h46v7H41z" fill="#ccc" stroke="#777" stroke-width=".5"/><path d="M22 55h19v10H22z" fill="#ff66f5"/><path d="M52 55h23v10H52z" fill="#fff" stroke="#bbb" stroke-width=".6" stroke-dasharray="2 1"/>' + T(107, 24, 4, '简', '#000', 'font-weight="700"') + T(107, 29, 4, '图', '#000', 'font-weight="700"'),
  mini, mini,
  bar + '<g font-weight="700">' + T(62, 27, 3, '如果自己想手写一个Java虚拟机的话，主要考虑哪些结构呢？', '#222') + T(36, 35, 3, '类加载器 和 执行引擎', '#222') + '</g>',
  banner('2- 类加载器与类的加载', '过程'), bar];
define('slide-thumb', el => { const n = +el.getAttribute('n'), on = el.hasAttribute('selected'); return `<style>
  :host { display: flex; gap: 9px; height: 96px; flex: none; }
  b { width: 28px; text-align: right; font-size: 20px; line-height: 12px; font-weight: 400; color: ${on ? '#d9532c' : '#666'}; }
  button { display: block; width: 124px; height: 72px; background: #fff; outline: ${on ? '3px solid #d9602f' : 'none'}; border: 1px solid ${on ? '#fff' : '#ccc'}; }
  svg { width: 122px; height: 70px; }
  </style><b>${n}</b><button aria-label="幻灯片 ${n}"><svg viewBox="0 0 122 70"><defs><linearGradient id="g" x2="0" y2="1"><stop stop-color="#0b8273"/><stop offset="1" stop-color="#05564c"/></linearGradient></defs>${THUMBS[n - 1]}</svg></button>`; });

define('scroll-bar', el => `<style>
  :host { display: flex; flex-direction: column; align-items: center; width: 20px; flex: none; background: #dedede; }
  button { width: 20px; height: 20px; background: #fff; border: 1px solid #bbb; flex: none; }
  .thumb { width: 20px; height: ${el.getAttribute('size')}px; margin-top: ${el.getAttribute('at')}px; background: #fff; border: 1px solid #bbb; }
  .rest { flex: 1; }
  </style><button aria-label="向上">${icon('up')}</button><div class="thumb"></div><div class="rest"></div><button aria-label="向下">${icon('down')}</button>`);

define('thumb-panel', () => `<style>
  :host { display: flex; width: 215px; flex: none; border-right: 2px solid #ccc; }
  .list { flex: 1; overflow: hidden; display: flex; flex-direction: column; padding-top: 14px; }
  scroll-bar { margin: 4px 5px 3px 0; }
  </style><div class="list">${THUMBS.map((t, i) => `<slide-thumb n="${i + 1}" ${i === 4 ? 'selected' : ''}></slide-thumb>`).join('')}</div><scroll-bar size="128" at="9"></scroll-bar>`,
  el => { el.shadowRoot.querySelector('.list').scrollTop = 43; });

define('edit-area', () => `<style>
  :host { display: flex; flex-direction: column; flex: 1; min-width: 0; }
  .stage { flex: 1; min-height: 0; display: flex; }
  .mid { flex: 1; min-width: 0; display: flex; align-items: flex-start; justify-content: center; padding: 19px 0 0 4px; overflow: hidden; }
  .bars { display: flex; flex-direction: column; padding: 4px 1px 0 0; }
  .bars scroll-bar { height: 605px; }
  .bars > button { height: 23px; width: 20px; }
  .notes { height: 55px; margin-left: 3px; border-top: 2px solid #ccc; }
  textarea { display: block; width: 100%; height: 46px; padding: 7px 13px; resize: none; font-size: 19px; line-height: 28px; color: #666; outline: 0; overflow: hidden; }
  </style><div class="stage"><div class="mid"><slide-canvas></slide-canvas></div>
  <div class="bars"><scroll-bar size="22" at="55"></scroll-bar><button aria-label="上一张">${icon('dblup')}</button><button aria-label="下一张">${icon('dbldown')}</button></div></div>
  <div class="notes"><textarea aria-label="备注">单击此处添加备注</textarea></div>`);

define('status-bar', () => `<style>
  :host { display: flex; align-items: center; position: relative; height: 29px; background: #f3f3f3; border-top: 1px solid #ccc; color: #555; line-height: 24px; overflow: hidden; }
  .txt { margin-left: 11px; } .i-proof { margin: 0 23px 0 24px; }
  .right { margin-left: auto; display: flex; align-items: center; }
  button { height: 28px; gap: 6px; }
  .view { width: 50px; } .on { background: #cfcfcf; }
  input { appearance: none; width: 132px; height: 20px; margin: 0 5px; background: linear-gradient(#aaa, #aaa) center / 2px 8px no-repeat, linear-gradient(#bbb, #bbb) center / 100% 1px no-repeat; }
  input::-webkit-slider-thumb { appearance: none; width: 6px; height: 16px; background: #666; }
  .pct { width: 56px; padding-left: 8px; } .fit { margin: 0 9px 0 14px; }
  .orb { position: absolute; left: 16px; bottom: 0; }
  </style><span class="orb">${icon('orb')}</span><span class="txt">幻灯片 第 5 张，共 41 张</span>${icon('proof')}<span>中文(中国)</span>
  <div class="right"><button>${icon('notes')}备注</button><button style="margin:0 25px 0 27px">${icon('comment')}批注</button>
  <button class="view on" aria-label="普通">${icon('normal')}</button><button class="view" aria-label="浏览">${icon('sorter')}</button><button class="view" aria-label="阅读">${icon('reading')}</button><button class="view" aria-label="放映">${icon('show')}</button>
  <button aria-label="缩小" style="margin-left:6px">${icon('minus')}</button><input type="range" min="0" max="100" value="46" aria-label="缩放"><button aria-label="放大">${icon('plus')}</button><button class="pct">91%</button><button class="fit" aria-label="适应窗口">${icon('fit')}</button></div>`);

define('ppt-app', () => `<style>
  :host { display: flex; flex-direction: column; box-sizing: border-box; height: 100vh; padding: 78px 0 77px; background: #000; }
  ppt-header, ppt-ribbon, status-bar { flex: none; }
  main { flex: 1; min-height: 0; display: flex; background: #e8e8e8; }
  </style><ppt-header></ppt-header><ppt-ribbon></ppt-ribbon><main><thumb-panel></thumb-panel><edit-area></edit-area></main><status-bar></status-bar>`);
</script>
</body>
</html>
